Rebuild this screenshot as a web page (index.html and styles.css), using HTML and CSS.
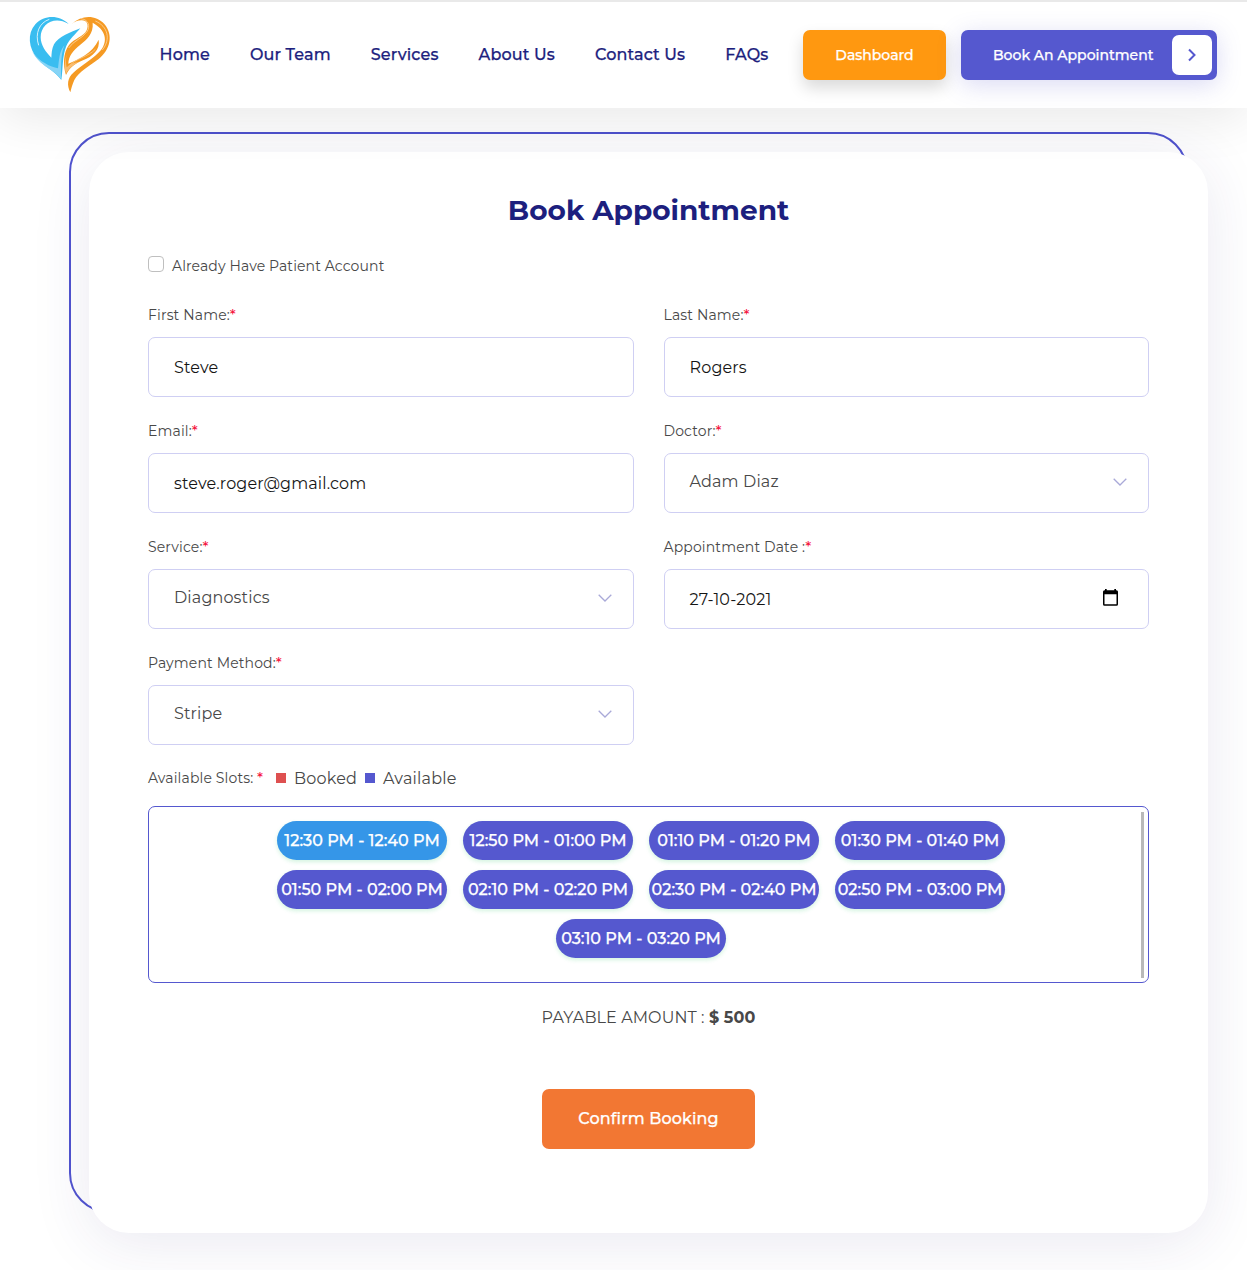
FILE: index.html
```html
<!DOCTYPE html>
<html lang="en">
<head>
<meta charset="utf-8">
<title>Book Appointment</title>
<link rel="stylesheet" href="styles.css">
</head>
<body>
<header class="header">
  <a class="logo" href="#" aria-label="Home page">
    <svg width="100" height="92" viewBox="0 0 300 276">
      <path fill="#39bdf0" d="M146 48C118 20 73 20 46 49C21 77 25 121 53 153C76 178 106 190 124 216C129 185 126 145 139 114C148 94 168 77 181 61C152 72 116 86 102 109C95 123 95 136 94 149C78 133 62 112 62 88C62 48 103 22 146 48Z"/>
      <path fill="#86d4f6" d="M36 130C60 164 91 176 114 181C118 155 116 135 133 112C121 143 124 180 123 213C101 184 61 177 36 130Z"/>
      <path fill="none" stroke="#d5f1fc" stroke-width="3" d="M88 34C58 44 44 76 56 112"/>
      <path fill="#f59a23" fill-rule="evenodd" d="M155 48C185 20 227 20 253 48C281 80 271 126 236 153C209 174 176 191 163 216C157 229 154 240 151 253C140 231 142 210 160 194C186 171 222 151 243 126C264 99 258 66 218 44C221 77 200 95 181 110C158 128 146 145 145 167C176 153 217 137 236 95C241 125 218 145 189 157C165 167 151 176 138 201C128 171 130 132 147 111C163 92 191 86 200 67C208 48 199 36 184 37C173 37 163 42 155 48Z"/>
      <path fill="none" stroke="#fde3c0" stroke-width="2" d="M182 32C205 34 212 54 201 71C187 92 160 98 146 120M226 39C264 55 273 94 247 126"/>
      <path fill="none" stroke="#fbd3a0" stroke-width="2" d="M226 124C204 147 168 150 145 176"/>
      <path fill="#f9bd72" d="M140 139C134 159 132 177 138 198C145 182 157 173 176 162C160 164 149 169 140 178C137 165 137 153 140 139Z"/>
    </svg>
  </a>
  <nav class="nav">
    <a href="#">Home</a>
    <a href="#">Our Team</a>
    <a href="#">Services</a>
    <a href="#">About Us</a>
    <a href="#">Contact Us</a>
    <a href="#">FAQs</a>
  </nav>
  <a class="btn btn-dashboard" href="#">Dashboard</a>
  <a class="btn btn-book" href="#"><span>Book An Appointment</span>
    <i class="btn-arrow"><svg width="10" height="14" viewBox="0 0 10 14"><path d="M2 1.500L7.500 7 2 12.500" fill="none" stroke="#5558cf" stroke-width="2"/></svg></i>
  </a>
</header>

<main class="card">
  <h1 class="title">Book Appointment</h1>
  <label class="check"><input type="checkbox"><span>Already Have Patient Account</span></label>

  <form class="form">
    <div class="fields">
      <div class="field">
        <label>First Name:<sup>*</sup></label>
        <div class="control typed">Steve</div>
      </div>
      <div class="field">
        <label>Last Name:<sup>*</sup></label>
        <div class="control typed">Rogers</div>
      </div>
      <div class="field">
        <label>Email:<sup>*</sup></label>
        <div class="control typed">steve.roger@gmail.com</div>
      </div>
      <div class="field">
        <label>Doctor:<sup>*</sup></label>
        <div class="control select"><span>Adam Diaz</span><svg width="14" height="8" viewBox="0 0 14 8"><path d="M.7.8L7 7l6.300-6.200"/></svg></div>
      </div>
      <div class="field">
        <label>Service:<sup>*</sup></label>
        <div class="control select"><span>Diagnostics</span><svg width="14" height="8" viewBox="0 0 14 8"><path d="M.7.8L7 7l6.300-6.200"/></svg></div>
      </div>
      <div class="field">
        <label>Appointment Date :<sup>*</sup></label>
        <div class="control date"><span>27-10-2021</span><svg width="15" height="17" viewBox="0 0 15 17"><path fill="#000" fill-rule="evenodd" d="M2 0h1.700v1.300h7.600V0H13v1.300h.5A1.500 1.500 0 0 1 15 2.800v12.400a1.500 1.500 0 0 1-1.500 1.500h-12A1.500 1.500 0 0 1 0 15.200V2.800a1.500 1.500 0 0 1 1.500-1.500H2zM1.500 5.300v9.900h12V5.300z"/></svg></div>
      </div>
      <div class="field">
        <label>Payment Method:<sup>*</sup></label>
        <div class="control select"><span>Stripe</span><svg width="14" height="8" viewBox="0 0 14 8"><path d="M.7.8L7 7l6.300-6.200"/></svg></div>
      </div>
    </div>

    <div class="legend">
      <span class="legend-label">Available Slots: <sup>*</sup></span>
      <i class="swatch booked"></i><span class="legend-text">Booked</span>
      <i class="swatch"></i><span class="legend-text">Available</span>
    </div>

    <div class="slots">
      <div class="slot-list">
        <span class="slot active">12:30 PM - 12:40 PM</span>
        <span class="slot">12:50 PM - 01:00 PM</span>
        <span class="slot">01:10 PM - 01:20 PM</span>
        <span class="slot">01:30 PM - 01:40 PM</span>
        <span class="slot">01:50 PM - 02:00 PM</span>
        <span class="slot">02:10 PM - 02:20 PM</span>
        <span class="slot">02:30 PM - 02:40 PM</span>
        <span class="slot">02:50 PM - 03:00 PM</span>
        <span class="slot">03:10 PM - 03:20 PM</span>
      </div>
      <div class="scrollbar"></div>
    </div>

    <p class="amount">PAYABLE AMOUNT : <b>$ 500</b></p>
    <button class="confirm" type="button">Confirm Booking</button>
  </form>
</main>
</body>
</html>
```

FILE: styles.css
```css
* { box-sizing: border-box; }

body {
  margin: 0;
  height: 1270px;
  overflow: hidden;
  background: #fff;
  color: #484848;
  font-family: Montserrat, Inter, sans-serif;
  font-size: 16px;
  line-height: 24px;
}

a { color: inherit; text-decoration: none; }

.header {
  position: relative;
  z-index: 1;
  display: flex;
  align-items: center;
  height: 108px;
  padding: 0 30px 0 20px;
  background: #fff;
  border-top: 2px solid #e9e9e9;
  box-shadow: 0 10px 50px rgba(0, 0, 0, .09);
}

.logo { height: 92px; margin: -2px 39.500px 0 0; }
.logo svg { display: block; }

.nav {
  display: flex;
  flex: 1;
  gap: 40px;
  color: #1d1f7e;
  font-weight: 500;
  letter-spacing: .14px;
  white-space: nowrap;
  -webkit-text-stroke: .25px;
}

.btn {
  display: flex;
  align-items: center;
  height: 50px;
  border-radius: 7px;
  color: #fff;
  font-size: 14px;
  font-weight: 500;
  white-space: nowrap;
  -webkit-text-stroke: .25px;
}

.btn-dashboard {
  justify-content: center;
  width: 143px;
  background: #ff9810;
  box-shadow: 0 8px 16px rgba(0, 0, 0, .15);
}

.btn-book {
  justify-content: space-between;
  width: 256px;
  margin-left: 15px;
  padding: 0 5px 0 32px;
  background: #5558cf;
  box-shadow: 0 5px 24px rgba(85, 88, 207, .22);
}

.btn-arrow {
  display: flex;
  align-items: center;
  justify-content: center;
  width: 40px;
  height: 40px;
  border-radius: 7px;
  background: #fff;
}

.card {
  position: relative;
  width: 1119px;
  height: 1081px;
  margin: 44px 0 0 89px;
  padding: 38px 59px 0;
  background: #fff;
  border-radius: 40px;
  box-shadow: 0 10px 60px rgba(45, 35, 120, .1);
}

/* Offset outline behind the card */
.card::before {
  content: "";
  position: absolute;
  z-index: -1;
  inset: -20px 20px 20px -20px;
  border: 2px solid #5053cf;
  border-radius: 40px;
}

.title {
  margin: 0;
  color: #1d1f7e;
  font-size: 28px;
  font-weight: 700;
  line-height: 40px;
  text-align: center;
}

.check {
  display: flex;
  align-items: center;
  gap: 8px;
  margin: 24px 0 25px;
  font-size: 14px;
  letter-spacing: .12px;
}

.check input {
  appearance: none;
  width: 16px;
  height: 16px;
  margin: -4px 0 0;
  border: 1px solid #bfbfbf;
  border-radius: 4px;
  background: #fff;
}

.fields {
  display: grid;
  grid-template-columns: 1fr 1fr;
  gap: 22.500px 30px;
}

.field label,
.legend-label {
  display: block;
  font-size: 14px;
  letter-spacing: .14px;
}

.field label { margin-bottom: 9.500px; }

sup {
  color: #f5173f;
  font-size: 15px;
  font-weight: 500;
  line-height: 0;
  vertical-align: 0;
}

.control {
  display: flex;
  align-items: center;
  justify-content: space-between;
  height: 60px;
  padding: 2px 21px 0 25px;
  border: 1px solid #cfcff3;
  border-radius: 7px;
  letter-spacing: .14px;
}

.typed, .date { color: #151515; }
.date { padding: 2px 30px 0 25px; }
.date svg { margin-top: -4px; }
.select span { margin-top: -4px; }
.select svg { margin-top: -3px; fill: none; stroke: #a9a9d8; stroke-width: 1.300; }

.legend {
  display: flex;
  align-items: center;
  height: 24px;
  margin: 21.500px 0 16px;
}

.legend-label { width: 128px; }

.swatch {
  width: 10px;
  height: 10px;
  margin-right: 8px;
  background: #5558cf;
}

.booked { background: #de5050; }
.legend-text { margin: 1px 8px 0 0; letter-spacing: .2px; }

.slots {
  display: flex;
  height: 177px;
  padding: 5px 4px 4px 0;
  border: 1px solid #5558cf;
  border-radius: 7px;
}

.slot-list {
  display: flex;
  flex: 1;
  flex-wrap: wrap;
  align-content: flex-start;
  justify-content: center;
  gap: 10px 16px;
  padding: 9px 108px 0 100px;
}

.slot {
  width: 170px;
  height: 39px;
  border-radius: 20px;
  background: #5558cf;
  box-shadow: 0 2px 4px rgba(40, 200, 100, .2);
  color: #fff;
  font-weight: 500;
  line-height: 39px;
  text-align: center;
  white-space: nowrap;
  -webkit-text-stroke: .25px;
}

.active { background: #3596e8; }

.scrollbar { width: 3px; background: #b9b9b9; }

.amount { margin: 23px 0 0; text-align: center; letter-spacing: .1px; }

.confirm {
  display: block;
  width: 213px;
  height: 60px;
  margin: 59px auto 0;
  padding: 0;
  border: 0;
  border-radius: 7px;
  background: #f27733;
  color: #fff;
  font: inherit;
  font-weight: 500;
  letter-spacing: .12px;
  -webkit-text-stroke: .25px;
}
```
